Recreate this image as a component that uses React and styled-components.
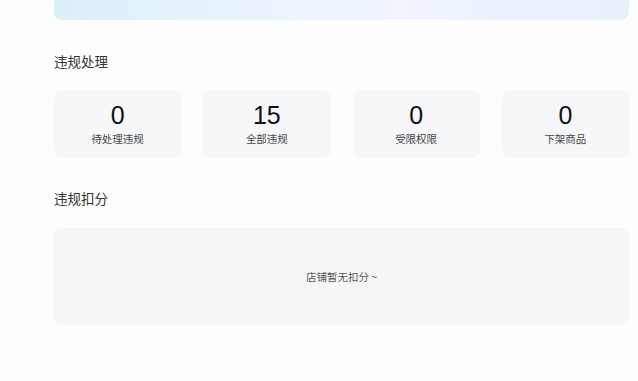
import React from 'react';
import styled, { createGlobalStyle } from 'styled-components';

const GlobalStyle = createGlobalStyle`
  body {
    margin: 0;
    background: #fefefe;
    font-family: "Liberation Sans", "Noto Sans CJK SC", sans-serif;
  }
`;

const Page = styled.div`
  padding: 0 9px 40px 54px;
`;

const Banner = styled.div`
  height: 20px;
  border-radius: 0 0 8px 8px;
  background: linear-gradient(90deg, #dcf0fa 0%, #eaf3fc 35%, #eff4fd 60%, #e8f0fc 100%);
`;

const SectionTitle = styled.h3`
  margin: ${p => p.$top}px 0 ${p => p.$bottom}px;
  font-size: 13.5px;
  line-height: 20px;
  font-weight: normal;
  color: #333;
  font-family: "Noto Sans CJK SC", sans-serif;
`;

const StatGrid = styled.div`
  display: grid;
  grid-template-columns: repeat(4, 1fr);
  gap: 22px;
`;

const StatCard = styled.div`
  height: 68px;
  box-sizing: border-box;
  padding-top: 11px;
  border-radius: 8px;
  background: #f6f7f8;
  display: flex;
  flex-direction: column;
  align-items: center;
`;

const StatValue = styled.div`
  font-family: "Liberation Sans", sans-serif;
  font-size: 25px;
  line-height: 28px;
  color: #111;
`;

const StatLabel = styled.div`
  margin-top: 3px;
  font-family: "Noto Sans CJK SC", sans-serif;
  font-size: 10.5px;
  line-height: 14px;
  color: #444;
`;

const EmptyBox = styled.div`
  height: 97px;
  border-radius: 8px;
  background: #f6f6f6;
  display: flex;
  align-items: center;
  justify-content: center;
  font-family: "Noto Sans CJK SC", sans-serif;
  font-size: 10.5px;
  color: #555;
`;

const stats = [
  { value: 0, label: '待处理违规' },
  { value: 15, label: '全部违规' },
  { value: 0, label: '受限权限' },
  { value: 0, label: '下架商品' },
];

export default function App() {
  return (
    <>
      <GlobalStyle />
      <Page>
        <Banner />
        <SectionTitle $top={31} $bottom={19}>违规处理</SectionTitle>
        <StatGrid>
          {stats.map(s => (
            <StatCard key={s.label}>
              <StatValue>{s.value}</StatValue>
              <StatLabel>{s.label}</StatLabel>
            </StatCard>
          ))}
        </StatGrid>
        <SectionTitle $top={30} $bottom={20}>违规扣分</SectionTitle>
        <EmptyBox>店铺暂无扣分 ~</EmptyBox>
      </Page>
    </>
  );
}
